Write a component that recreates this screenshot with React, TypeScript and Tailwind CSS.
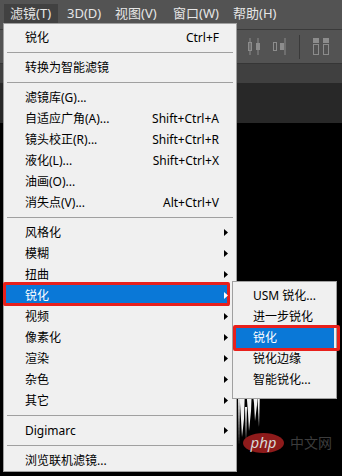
type Entry =
  | { kind: 'sep' }
  | { kind: 'item'; label: string; shortcut?: string; sub?: boolean; active?: boolean }

const sep: Entry = { kind: 'sep' }
const it = (label: string, extra: Partial<{ shortcut: string; sub: boolean; active: boolean }> = {}): Entry => ({
  kind: 'item',
  label,
  ...extra,
})

const FILTER_MENU: Entry[] = [
  it('锐化', { shortcut: 'Ctrl+F' }),
  sep,
  it('转换为智能滤镜'),
  sep,
  it('滤镜库(G)...'),
  it('自适应广角(A)...', { shortcut: 'Shift+Ctrl+A' }),
  it('镜头校正(R)...', { shortcut: 'Shift+Ctrl+R' }),
  it('液化(L)...', { shortcut: 'Shift+Ctrl+X' }),
  it('油画(O)...'),
  it('消失点(V)...', { shortcut: 'Alt+Ctrl+V' }),
  sep,
  it('风格化', { sub: true }),
  it('模糊', { sub: true }),
  it('扭曲', { sub: true }),
  it('锐化', { sub: true, active: true }),
  it('视频', { sub: true }),
  it('像素化', { sub: true }),
  it('渲染', { sub: true }),
  it('杂色', { sub: true }),
  it('其它', { sub: true }),
  sep,
  it('Digimarc', { sub: true }),
  sep,
  it('浏览联机滤镜...'),
]

const SHARPEN_MENU = ['USM 锐化...', '进一步锐化', '锐化', '锐化边缘', '智能锐化...']

function Arrow({ white }: { white?: boolean }) {
  return (
    <svg width="4" height="7" viewBox="0 0 4 7" className="absolute right-[8px] top-[7px]">
      <polygon points="0,0 4,3.5 0,7" fill={white ? '#ffffff' : '#000000'} />
    </svg>
  )
}

function AlignIcon({ variant }: { variant: 'a' | 'b' }) {
  return (
    <svg width="13" height="17" viewBox="0 0 13 17">
      {variant === 'a' ? (
        <g fill="none" stroke="#8c8c8c" strokeWidth="1">
          <rect x="0.5" y="4.5" width="3" height="8" />
          <line x1="2" y1="0" x2="2" y2="17" />
          <rect x="8.5" y="5.5" width="3" height="6" fill="#8c8c8c" />
          <line x1="10" y1="0" x2="10" y2="17" />
        </g>
      ) : (
        <g fill="none" stroke="#8c8c8c" strokeWidth="1">
          <rect x="0.5" y="4.5" width="3" height="8" />
          <rect x="7.5" y="5.5" width="3" height="6" fill="#8c8c8c" />
          <line x1="12" y1="0" x2="12" y2="17" />
        </g>
      )}
    </svg>
  )
}

function DistributeIcon() {
  return (
    <svg width="16" height="17" viewBox="0 0 16 17">
      <g fill="none" stroke="#8c8c8c" strokeWidth="1">
        <rect x="0.5" y="0.5" width="5" height="4" fill="#8c8c8c" />
        <rect x="0.5" y="6.5" width="5" height="10" />
        <rect x="10.5" y="0.5" width="5" height="4" fill="#8c8c8c" />
        <rect x="10.5" y="6.5" width="5" height="10" />
      </g>
    </svg>
  )
}

export default function App() {
  return (
    <div className="relative w-[342px] h-[476px] overflow-hidden flex flex-col bg-black font-['Noto_Sans','Noto_Sans_CJK_SC',sans-serif]">
      {/* Menu bar */}
      <div className="h-[29px] shrink-0 bg-[#535353] flex items-start pt-[4px] pl-[4px] text-[13px] leading-[19px] text-[#e6e6e6]">
        <div className="w-[54px] h-[19px] pl-[6px] bg-[#414141]">滤镜(T)</div>
        <div className="w-[48px] pl-[9px]">3D(D)</div>
        <div className="w-[58px] pl-[9px]">视图(V)</div>
        <div className="w-[60px] pl-[9px]">窗口(W)</div>
        <div className="pl-[9px]">帮助(H)</div>
      </div>

      {/* Options toolbar */}
      <div className="h-[34px] shrink-0 bg-[#535353] border-t border-[#3a3a3a] flex items-center justify-end pr-[13px] gap-[12px]">
        <AlignIcon variant="a" />
        <AlignIcon variant="b" />
        <div className="w-px h-[24px] bg-[#3a3a3a] mx-[1px]" />
        <DistributeIcon />
      </div>

      {/* Document tabs */}
      <div className="h-[20px] shrink-0 bg-[#404040] border-t border-[#363636]" />
      <div className="h-[40px] shrink-0 bg-[#282828]" />

      {/* Canvas */}
      <div className="relative flex-1 bg-black">
        <svg width="24" height="62" viewBox="0 0 24 62" className="absolute left-[237px] top-[264px]">
          <g fill="#f2f2f2">
            <path d="M2 0 L8 0 L7 32 L5 50 L4 32 Z" />
            <path d="M9 0 L15 0 L14 24 L12 44 L11 26 Z" />
            <path d="M15 0 L21 0 L20 18 L18 34 L17 16 Z" />
            <path d="M1 8 L3 8 L2 58 Z" />
            <path d="M20 2 L23 2 L22 40 Z" />
            <path d="M8 20 L10 20 L9 54 Z" />
          </g>
        </svg>
        {/* php watermark */}
        <div className="absolute left-[243px] top-[310px] flex items-center gap-[6px]">
          <div className="w-[41px] h-[20px] rounded-[50%] bg-[#8e1b1b] flex items-center justify-center">
            <span className="text-[15px] leading-none italic text-[#d8d8d8] -mt-[2px]">php</span>
          </div>
          <span className="text-[14px] leading-none text-[#3c3c3c]">中文网</span>
        </div>
      </div>

      {/* Filter dropdown */}
      <div className="absolute left-[3px] top-[23px] w-[234px] h-[449px] bg-[#f0f0f0] border border-[#a0a0a0] pt-[3px] text-[12px] text-black">
        {FILTER_MENU.map((e, i) =>
          e.kind === 'sep' ? (
            <div key={i} className="h-[9px] flex items-center px-[3px]">
              <div className="h-px w-full bg-[#a0a0a0]" />
            </div>
          ) : (
            <div key={i} className="relative h-[21px] leading-[21px]">
              {e.active && (
                <>
                  <div className="absolute left-[1px] right-[7px] top-0 bottom-0 bg-[#0a78d7]" />
                  <div className="absolute -left-[1px] top-[-3px] w-[227px] h-[24px] border-[3px] border-[#e8201c] rounded-[2px]" />
                </>
              )}
              <div className={`relative flex pl-[21px] pr-[17px] ${e.active ? 'text-white' : ''}`}>
                <span className="flex-1">{e.label}</span>
                {e.shortcut && <span>{e.shortcut}</span>}
              </div>
              {e.sub && <Arrow white={e.active} />}
            </div>
          )
        )}
      </div>

      {/* Sharpen submenu */}
      <div className="absolute left-[232px] top-[281px] w-[105px] h-[118px] bg-[#f0f0f0] border border-[#a0a0a0] pt-[3px] text-[12px] text-black">
        {SHARPEN_MENU.map((label, i) => (
          <div key={i} className="relative h-[21px] leading-[21px]">
            {label === '锐化' && (
              <>
                <div className="absolute left-[3px] right-[2px] top-0 bottom-0 bg-[#0a78d7]" />
                <div className="absolute left-0 top-[-2px] w-[107px] h-[26px] border-[3px] border-[#e8201c] rounded-[2px]" />
              </>
            )}
            <span className={`relative pl-[20px] ${label === '锐化' ? 'text-white' : ''}`}>{label}</span>
          </div>
        ))}
      </div>
    </div>
  )
}
